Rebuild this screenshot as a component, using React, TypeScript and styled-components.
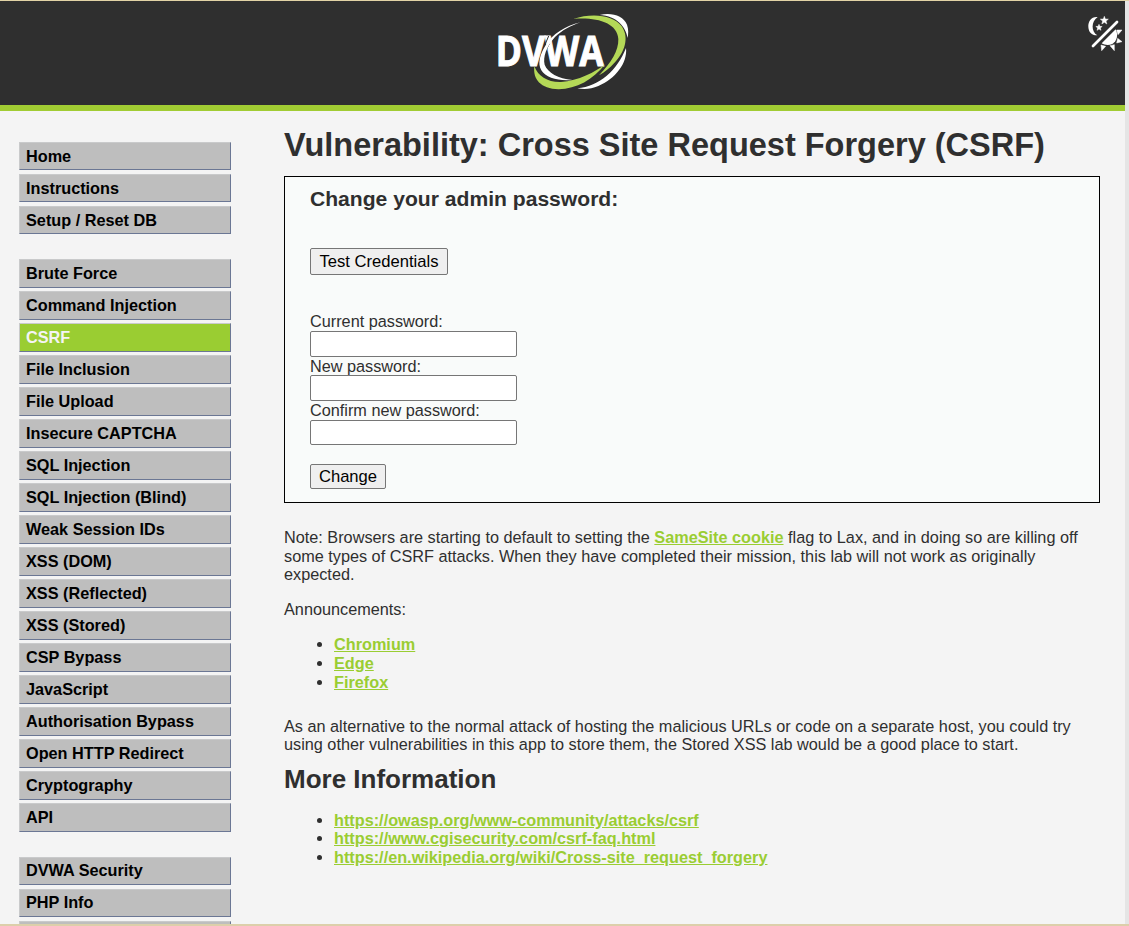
import React from "react";
import styled, { createGlobalStyle } from "styled-components";

const GlobalStyle = createGlobalStyle`
  html, body { margin: 0; padding: 0; }
  body { background: #f4f4f4; overflow: hidden; }
  * { box-sizing: border-box; }
`;

const Window = styled.div`
  width: 1129px;
  height: 926px;
  overflow: hidden;
  display: flex;
  flex-direction: column;
  border-top: 1px solid #e2d3a6;
  border-bottom: 2px solid #dccfaa;
  background: #e5e5e5;
  font-family: "Liberation Sans", Arial, sans-serif;
  font-size: 16.25px;
  color: #2f2f2f;
`;

const Page = styled.div`
  width: 1125px;
  height: 923px;
  overflow: hidden;
  background: #f4f4f4;
`;

const Header = styled.header`
  height: 110px;
  display: grid;
  grid-template-columns: 1fr auto 1fr;
  background: #2f2f2f;
  border-bottom: 6px solid #a1cc33;
`;

const LogoSlot = styled.div`
  grid-column: 2;
  padding-top: 11px;
  svg { display: block; }
`;

const ThemeButton = styled.button`
  justify-self: end;
  align-self: start;
  margin: 11px 0 0;
  padding: 0;
  border: 0;
  background: none;
  svg { display: block; }
`;

const Columns = styled.div`
  display: flex;
  align-items: flex-start;
`;

const Menu = styled.nav`
  width: 284px;
  flex: none;
  padding: 31px 0 0 19px;
`;

const MenuGroup = styled.ul`
  list-style: none;
  margin: 0 0 25px;
  padding: 0;
  width: 212px;
  display: flex;
  flex-direction: column;
`;

const MenuItem = styled.li<{ $active?: boolean; $tall?: boolean; $line?: number }>`
  height: ${(p) => (p.$tall ? 29 : 28)}px;
  margin-bottom: ${(p) => (p.$tall ? 3 : 4)}px;
  &:last-child { margin-bottom: 0; }
  padding-left: 6px;
  line-height: ${(p) => p.$line ?? 27}px;
  font-weight: bold;
  font-size: 16.25px;
  white-space: nowrap;
  color: ${(p) => (p.$active ? "#f4f4f4" : "#000")};
  background: ${(p) => (p.$active ? "#9acd32" : "#bebebe")};
  border: 1px solid #c9cacb;
  border-right-color: #6b7794;
  border-bottom-color: #6b7794;
`;

const Main = styled.main`
  width: 816px;
  padding-top: 14px;
`;

const Title = styled.h1`
  margin: 0;
  font-size: 32.5px;
  line-height: 40px;
  height: 40px;
  white-space: nowrap;
`;

const Panel = styled.section`
  margin-top: 11px;
  height: 327px;
  padding: 9px 25px 0;
  border: 1px solid #000;
  background: #f9fbfa;
`;

const PanelTitle = styled.h3`
  margin: 0 0 36px;
  font-size: 21.1px;
  line-height: 26px;
`;

const Button = styled.button<{ $w: number; $h: number }>`
  display: block;
  width: ${(p) => p.$w}px;
  height: ${(p) => p.$h}px;
  padding: 0;
  border: 1px solid #767676;
  border-radius: 2px;
  background: #efefef;
  color: #000;
  font: 16.6px/20px "Liberation Sans", Arial, sans-serif;
  white-space: nowrap;
`;

const Form = styled.form`
  margin-top: 37px;
  display: flex;
  flex-direction: column;
  align-items: flex-start;
`;

const Label = styled.label<{ $h: number }>`
  height: ${(p) => p.$h}px;
  line-height: 19px;
`;

const Input = styled.input<{ $h: number }>`
  width: 207px;
  height: ${(p) => p.$h}px;
  padding: 1px 2px;
  border: 1px solid #767676;
  border-radius: 2px;
  background: #fff;
`;

const Submit = styled.div`
  margin-top: 19px;
`;

const Text = styled.p<{ $top: number; $line?: number }>`
  margin: ${(p) => p.$top}px 0 0;
  line-height: ${(p) => p.$line ?? 18.7}px;
  white-space: nowrap;
`;

const Heading = styled.h2`
  margin: 10.4px 0 0;
  font-size: 26px;
  line-height: 32px;
`;

const List = styled.ul<{ $top: number; $line: number }>`
  margin: ${(p) => p.$top}px 0 0;
  padding: 0 0 0 50px;
  line-height: ${(p) => p.$line}px;
`;

const Link = styled.a`
  color: #9acd32;
  font-weight: bold;
  text-decoration: underline;
`;

const Logo = () => (
  <svg width="135" height="80" viewBox="0 0 405 240">
    <text x="2" y="161" fill="#fff" stroke="#fff" strokeWidth="3" fontFamily="Open Sans, sans-serif" fontWeight="700" fontSize="122" textLength="324" lengthAdjust="spacingAndGlyphs">DVWA</text>
    <path fill="none" stroke="#2f2f2f" strokeWidth="3" d="M161 72C147 104 136 132 130 165M164 94C151 116 147 136 149 158" />
    <path fill="#fff" d="M257 31C210 42 172 66 151 101C135 128 127 153 139 175C152 198 192 208 232 204C190 200 158 182 149 158C144 135 153 105 180 75C202 54 228 41 257 31Z" />
    <path fill="#fff" d="M314 9C350 0 386 12 396 38C401 52 400 64 398 78C393 45 366 12 314 9Z" />
    <path fill="#fff" d="M393 108C398 154 360 201 310 222C289 231 269 233 247 229C314 223 367 174 393 108Z" />
    <path fill="#b4d957" d="M235 21C292 2 354 9 380 43C404 77 389 122 357 154C344 168 330 180 312 190C349 151 371 116 370 81C367 32 304 15 235 21Z" />
    <path fill="#b4d957" d="M118 163C130 194 157 211 198 210C249 207 302 180 330 157C295 203 244 231 191 232C137 231 113 201 118 163Z" />
  </svg>
);

const ThemeIcon = () => (
  <svg width="40" height="42" viewBox="0 0 120 126">
    <path fill="#fff" d="M38 15C19 13 9 28 10 45C11 61 21 71 37 70C18 59 18 28 38 15Z" />
    <path fill="#fff" stroke="#fff" strokeWidth="1.500" d="M58 13l3 8 9 .5-7 5.500 2.500 9-7.500-5-7.500 5 2.500-9-7-5.500 9-.5zM42 37l2.500 6 7 .500-5.500 4.500 2 7-6-4-6 4 2-7-5.500-4.500 7-.500z" />
    <path stroke="#fff" strokeWidth="8" strokeLinecap="round" d="M24 102L96 30" />
    <path fill="#fff" d="M50 94L92 52C101 70 95 88 83 95C72 101 60 100 50 94Z" />
    <path fill="#fff" stroke="#fff" strokeWidth="1.500" d="M95 54l16 0-12 14zM98 79l13 10-16 4zM75 101l13-3 0 18zM48 99l14 4-12 13z" />
  </svg>
);

type Entry = { label: string; tall?: boolean; active?: boolean; line?: number };
const challenges = [
  "Brute Force", "Command Injection", "CSRF", "File Inclusion", "File Upload",
  "Insecure CAPTCHA", "SQL Injection", "SQL Injection (Blind)", "Weak Session IDs",
  "XSS (DOM)", "XSS (Reflected)", "XSS (Stored)", "CSP Bypass", "JavaScript",
  "Authorisation Bypass", "Open HTTP Redirect", "Cryptography", "API",
];
const groups: Entry[][] = [
  ["Home", "Instructions", "Setup / Reset DB"].map((label) => ({ label })),
  challenges.map((label) => ({ label, tall: true, active: label === "CSRF" })),
  ["DVWA Security", "PHP Info", ""].map((label) => ({ label, line: 25 })),
];

export default function App() {
  return (
    <Window>
      <GlobalStyle />
      <Page>
        <Header>
          <LogoSlot><Logo /></LogoSlot>
          <ThemeButton aria-label="Toggle theme"><ThemeIcon /></ThemeButton>
        </Header>
        <Columns>
          <Menu>
            {groups.map((group) => (
              <MenuGroup key={group[0].label}>
                {group.map((item) => (
                  <MenuItem key={item.label} $tall={item.tall} $active={item.active} $line={item.line}>{item.label}</MenuItem>
                ))}
              </MenuGroup>
            ))}
          </Menu>
          <Main>
            <Title>Vulnerability: Cross Site Request Forgery (CSRF)</Title>
            <Panel>
              <PanelTitle>Change your admin password:</PanelTitle>
              <Button $w={138} $h={27}>Test Credentials</Button>
              <Form>
                <Label $h={19}>Current password:</Label>
                <Input type="password" $h={26} />
                <Label $h={18}>New password:</Label>
                <Input type="password" $h={26} />
                <Label $h={19}>Confirm new password:</Label>
                <Input type="password" $h={25} />
                <Submit><Button type="button" $w={76} $h={25}>Change</Button></Submit>
              </Form>
            </Panel>
            <Text $top={25}>
              Note: Browsers are starting to default to setting the <Link>SameSite cookie</Link> flag to Lax, and in doing so are killing off<br />
              some types of CSRF attacks. When they have completed their mission, this lab will not work as originally<br />
              expected.
            </Text>
            <Text $top={16}>Announcements:</Text>
            <List $top={16} $line={19}>
              <li><Link>Chromium</Link></li>
              <li><Link>Edge</Link></li>
              <li><Link>Firefox</Link></li>
            </List>
            <Text $top={25.2} $line={18}>
              As an alternative to the normal attack of hosting the malicious URLs or code on a separate host, you could try<br />
              using other vulnerabilities in this app to store them, the Stored XSS lab would be a good place to start.
            </Text>
            <Heading>More Information</Heading>
            <List $top={15.6} $line={18.5}>
              <li><Link>https://owasp.org/www-community/attacks/csrf</Link></li>
              <li><Link>https://www.cgisecurity.com/csrf-faq.html</Link></li>
              <li><Link>https://en.wikipedia.org/wiki/Cross-site_request_forgery</Link></li>
            </List>
          </Main>
        </Columns>
      </Page>
    </Window>
  );
}
